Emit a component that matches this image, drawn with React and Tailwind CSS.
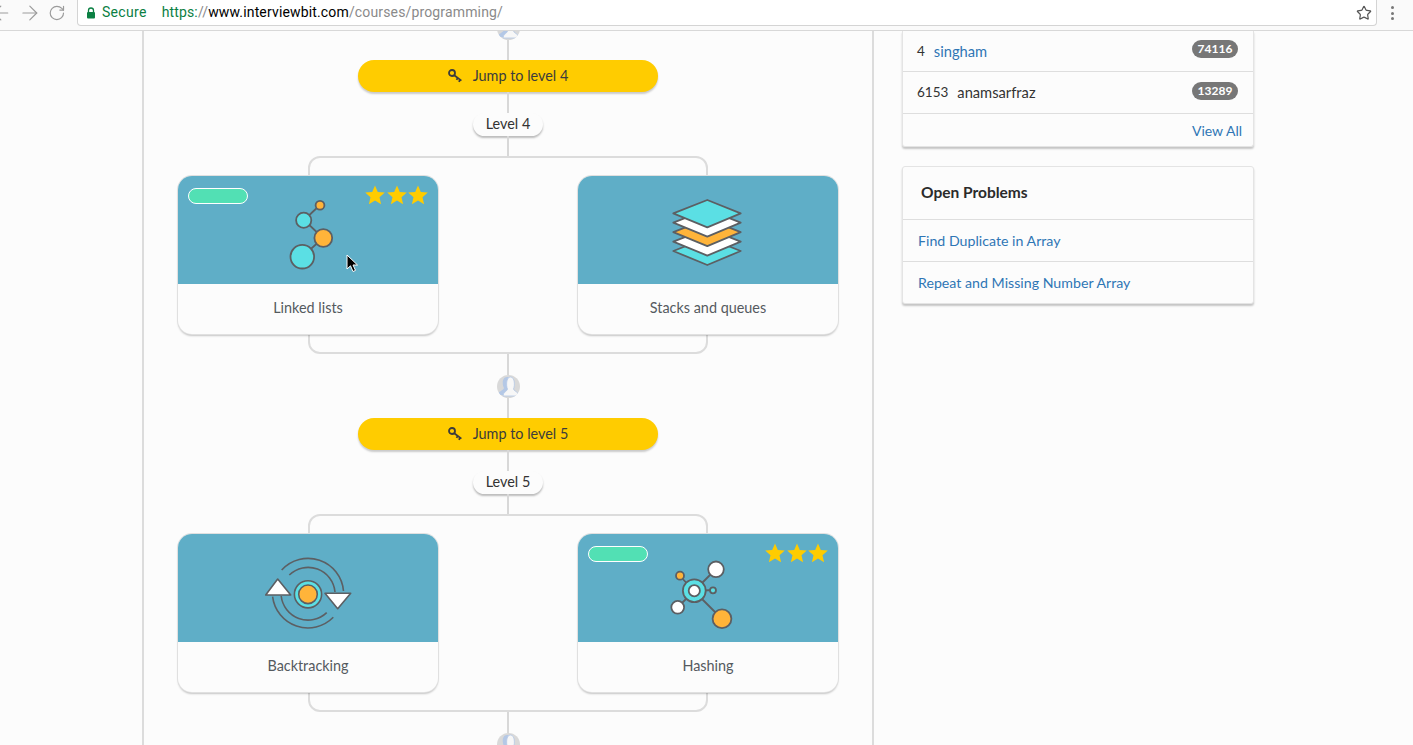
import React from 'react';
import { ArrowLeft, ArrowRight, RotateCw, Star } from 'lucide-react';

const INK = '#5c5f63';

const LinkedListIcon = () => (
    <svg width="100" height="100" viewBox="0 0 100 100" stroke={INK} strokeWidth="1.8">
        <path d="M62 25 L46 40 L65 58 L44 77" fill="none" />
        <circle cx="62" cy="25.3" r="4.4" fill="#ffb43a" />
        <circle cx="45.7" cy="40.3" r="7.6" fill="#5bdfe4" />
        <circle cx="65.3" cy="58" r="8.9" fill="#ffb43a" />
        <circle cx="44.3" cy="76.7" r="11.8" fill="#5bdfe4" />
    </svg>
);

const StackIcon = () => (
    <svg width="100" height="100" viewBox="0 0 100 100" stroke={INK} strokeWidth="1.8" strokeLinejoin="round">
        <polygon points="49.3,57.7 82.7,71 49.3,85 15.3,71" fill="#5bdfe4" />
        <polygon points="49.3,48.3 82.7,61.6 49.3,75.6 15.3,61.6" fill="#ffffff" />
        <polygon points="49.3,38.9 82.7,52.2 49.3,66.2 15.3,52.2" fill="#ffb43a" />
        <polygon points="49.3,29.4 82.7,42.7 49.3,56.7 15.3,42.7" fill="#ffffff" />
        <polygon points="49.3,20 82.7,33.3 49.3,47.3 15.3,33.3" fill="#5bdfe4" />
    </svg>
);

const BacktrackIcon = () => (
    <svg width="100" height="100" viewBox="0 0 100 100" stroke={INK} strokeWidth="1.6" fill="none">
        <path d="M23.7 32 A35.6 35.6 0 0 1 85.5 53" />
        <path d="M31.3 37 A27 27 0 0 1 77 54" />
        <path d="M75.3 79.3 A35.6 35.6 0 0 1 14.6 58.6" />
        <path d="M68.7 74.6 A27 27 0 0 1 23.2 58" />
        <polygon points="19.7,41 7.7,57 32.7,57" fill="#ffffff" strokeLinejoin="round" />
        <polygon points="67,55.3 92.7,55.3 79.7,70.7" fill="#ffffff" strokeLinejoin="round" />
        <circle cx="50" cy="56.3" r="13.6" fill="#5bdfe4" />
        <circle cx="50" cy="56.3" r="9.3" fill="#ffb43a" />
    </svg>
);

const HashIcon = () => (
    <svg width="100" height="100" viewBox="0 0 100 100" stroke={INK} strokeWidth="1.8">
        <path d="M36 53 L58 31 M36 53 L22 38 M36 53 L55 52 M36 53 L20 69 M36 53 L64 81" fill="none" />
        <circle cx="58" cy="31.3" r="7.8" fill="#ffffff" />
        <circle cx="22" cy="37.7" r="4" fill="#ffb43a" />
        <circle cx="55" cy="52.3" r="3" fill="#5bdfe4" />
        <circle cx="19.7" cy="69.3" r="6.4" fill="#ffffff" />
        <circle cx="64" cy="80.7" r="9.4" fill="#ffb43a" />
        <circle cx="36.3" cy="52.7" r="11.4" fill="#5bdfe4" />
        <circle cx="36.3" cy="52.7" r="5.6" fill="#ffffff" />
    </svg>
);

const KeyIcon = () => (
    <svg width="14" height="14" viewBox="0 0 14 14" fill="none" stroke="#3c3c3c" strokeWidth="1.8">
        <circle cx="4" cy="4" r="3" />
        <path d="M6.2 6.2 L13.4 11.6 M9.6 8.8 L8.6 10.8 M12 10.5 L11 12.8" />
    </svg>
);

const Avatar = () => (
    <div className="w-[23px] h-[23px] -mb-px shrink-0 rounded-full bg-[#d9d9d9] overflow-hidden z-10">
        <svg width="23" height="23" viewBox="0 0 23 23">
            <path d="M1 20 C1 16 6 16 7 13 C5 10 5 2 10 2 C13 2 14 5 14 8 L14 20 Z" fill="#b4c8e6" />
            <path d="M6 21 C6 17 10.5 16 10.5 14 C9 11 9 2 13.5 2 C18 2 18 11 16.5 14 C16.5 16 22 17 22 21 Z" fill="#f7f7f7" stroke="#b4c8e6" strokeWidth="0.8" />
        </svg>
    </div>
);

const Line = ({ h }) => <div className={`w-0.5 bg-[#d8d8d8] shrink-0 ${h}`} />;

const Stars = () => (
    <div className="absolute top-[9px] right-[10px] flex gap-[1.5px]">
        {[0, 1, 2].map((i) => (
            <svg key={i} width="20" height="20" viewBox="0 0 20 20">
                <polygon points="10,0.5 12.8,7 19.8,7.6 14.5,12.2 16.1,19.2 10,15.5 3.9,19.2 5.5,12.2 0.2,7.6 7.2,7" fill="#ffcc00" />
            </svg>
        ))}
    </div>
);

const TopicCard = ({ title, icon, done, children }) => (
    <div className="relative w-[260px] h-[158px] rounded-[14px] bg-[#fcfcfc] shadow-[0_0_0_1px_#e0e0e0,0_2px_2px_rgba(0,0,0,0.22)] overflow-hidden">
        <div className="relative h-[108px] bg-[#5faec7] flex items-center justify-center">
            {icon}
            {done && (
                <>
                    <div className="absolute left-[10px] top-[12px] w-[60px] h-4 rounded-full bg-[#52e0b4] border border-white" />
                    <Stars />
                </>
            )}
            {children}
        </div>
        <div className="h-[50px] pb-[3px] flex items-center justify-center text-[14.4px] text-[#555a5f]">{title}</div>
    </div>
);

const Level = ({ n, left, right }) => (
    <>
        <Avatar />
        <Line h="h-[21px]" />
        <button className="w-[300px] h-[32px] shrink-0 rounded-full bg-[#ffcc00] shadow-[0_2px_2px_rgba(0,0,0,0.2)] flex items-center justify-center gap-[11px] text-[14.4px] text-[#3c3c3c]">
            <KeyIcon />
            Jump to level {n}
        </button>
        <Line h="h-[21px]" />
        <div className="w-[70px] h-[23px] pb-px shrink-0 rounded-full bg-[#fcfcfc] shadow-[0_2px_2px_rgba(0,0,0,0.25)] flex items-center justify-center text-[14.4px] text-[#333]">
            Level {n}
        </div>
        <Line h="h-[21px]" />
        <div className="relative w-[660px] shrink-0 flex justify-between py-[19px]">
            <div className="absolute left-[130px] right-[130px] -top-px -bottom-px rounded-xl border-2 border-[#dcdcdc]" />
            {left}
            {right}
        </div>
        <Line h="h-[22px]" />
    </>
);

const Cursor = () => (
    <svg className="absolute left-[168px] top-[78px]" width="13" height="19" viewBox="0 0 13 19">
        <path d="M1 1 L1 15 L4.5 11.8 L7 17.5 L9.5 16.4 L7 11 L11.5 11 Z" fill="#000" stroke="#fff" strokeWidth="1" />
    </svg>
);

const Row = ({ children, className = '' }) => (
    <div className={`flex items-center border-b border-[#dedede] last:border-b-0 px-[15px] text-[14.2px] ${className}`}>
        {children}
    </div>
);

const Badge = ({ children }) => (
    <span className="ml-auto w-[46px] h-[18px] rounded-full bg-[#777] text-white text-[12px] font-bold flex items-center justify-center">
        {children}
    </span>
);

const Card = ({ children, className = '' }) => (
    <div className={`w-[352px] bg-[#fcfcfc] border border-[#e4e4e4] rounded-[3px] shadow-[0_2px_2px_rgba(0,0,0,0.22)] ${className}`}>
        {children}
    </div>
);

const App = () => {
    return (
        <div className="h-screen overflow-hidden flex flex-col bg-[#fcfcfc] font-['Lato',sans-serif]">
            {/* browser bar */}
            <div className="h-[31px] shrink-0 bg-[#fafafa] border-b border-[#d8d8d8] flex items-start z-20">
                <div className="w-[77px] shrink-0 h-[25px] flex items-center text-[#9b9b9b] -ml-[11px]">
                    <ArrowLeft size={24} strokeWidth={1.2} />
                    <ArrowRight size={24} strokeWidth={1.2} className="ml-[5px]" />
                    <RotateCw size={18} strokeWidth={1.6} className="ml-[7px]" />
                </div>
                <div className="ml-[11px] w-[1300px] h-[26px] bg-white border border-t-0 border-[#d4d4d4] rounded-b-[4px] flex items-center font-['Roboto',sans-serif] text-[14px]">
                    <svg className="ml-[8px]" width="10" height="12" viewBox="0 0 10 12">
                        <path d="M2.5 5 V3.5 a2.5 2.5 0 0 1 5 0 V5" fill="none" stroke="#0b8043" strokeWidth="1.3" />
                        <rect x="1" y="5" width="8" height="6.5" rx="1" fill="#0b8043" />
                    </svg>
                    <span className="ml-[6px] tracking-[0.3px] text-[#0b8043]">Secure</span>
                    <span className="ml-[15px] tracking-[0.15px]">
                        <span className="text-[#0b8043]">https:</span>
                        <span className="text-[#8a8a8a]">//</span>
                        <span className="text-black">www.interviewbit.com</span>
                        <span className="text-[#8a8a8a]">/courses/programming/</span>
                    </span>
                    <Star size={16} strokeWidth={1.8} className="ml-auto mr-[4px] text-[#555]" />
                </div>
                <div className="ml-[14px] flex flex-col gap-[2.5px] mt-[6px]">
                    <span className="w-[3px] h-[3px] rounded-full bg-[#777]" />
                    <span className="w-[3px] h-[3px] rounded-full bg-[#777]" />
                    <span className="w-[3px] h-[3px] rounded-full bg-[#777]" />
                </div>
            </div>

            <div className="flex-1 min-h-0 flex pl-[142px]">
                {/* course tree */}
                <div className="w-[732px] shrink-0 border-x-2 border-[#dcdcdc] flex flex-col items-center -mt-[14px]">
                    <Level
                        n={4}
                        left={
                            <TopicCard title="Linked lists" icon={<LinkedListIcon />} done>
                                <Cursor />
                            </TopicCard>
                        }
                        right={<TopicCard title="Stacks and queues" icon={<StackIcon />} />}
                    />
                    <Level
                        n={5}
                        left={<TopicCard title="Backtracking" icon={<BacktrackIcon />} />}
                        right={<TopicCard title="Hashing" icon={<HashIcon />} done />}
                    />
                    <Avatar />
                </div>

                {/* sidebar */}
                <div className="ml-[28px] flex flex-col gap-[19px]">
                    <Card className="rounded-t-none border-t-0">
                        <Row className="h-[41px] !items-start pt-[9px] !text-[14.7px] !pl-[14px]">
                            <span className="text-[#333] text-[13.5px] pt-px">4</span>
                            <a className="ml-[9px] text-[#2f76b5]">singham</a>
                            <Badge>74116</Badge>
                        </Row>
                        <Row className="h-[42px] !text-[14.7px] !pl-[14px]">
                            <span className="text-[#333] text-[13.5px]">6153</span>
                            <span className="ml-[9px] text-[#333]">anamsarfraz</span>
                            <span className="ml-auto -mt-1 flex">
                                <Badge>13289</Badge>
                            </span>
                        </Row>
                        <Row className="h-[32px] justify-end !px-[11px] !text-[14px]">
                            <a className="text-[#2f76b5]">View All</a>
                        </Row>
                    </Card>
                    <Card>
                        <Row className="h-[53px] font-bold !text-[15.5px] text-[#2b2b2b] !px-[18px]">Open Problems</Row>
                        <Row className="h-[42px] text-[#2f76b5]">Find Duplicate in Array</Row>
                        <Row className="h-[41px] text-[#2f76b5]">Repeat and Missing Number Array</Row>
                    </Card>
                </div>
            </div>
        </div>
    );
};

export default App;
